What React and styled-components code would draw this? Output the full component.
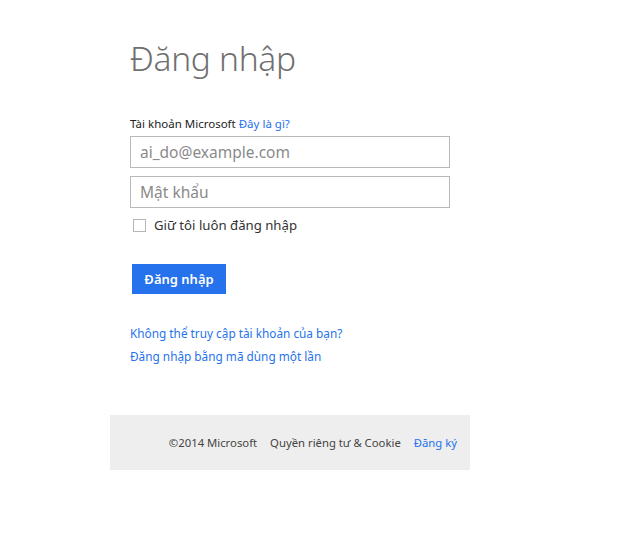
import React from "react";
import styled, { createGlobalStyle } from "styled-components";

const GlobalStyle = createGlobalStyle`
	html, body {
		margin: 0;
		padding: 0;
		background: #fff;
	}

	body {
		font-family: "Noto Sans", "Open Sans", "DejaVu Sans", sans-serif;
		color: #333;
	}
`;

const Page = styled.div`
	width: 637px;
	height: 542px;
	padding-top: 34px;
	box-sizing: border-box;
`;

const Form = styled.form`
	margin: 0 0 0 130px;
	width: 320px;
	display: flex;
	flex-direction: column;
`;

const Title = styled.h1`
	margin: 0 0 34px;
	font-size: 33.5px;
	font-weight: 300;
	line-height: 48px;
	color: #707070;
	letter-spacing: -0.3px;
`;

const Label = styled.div`
	margin: 0 0 4px;
	font-size: 11.5px;
	line-height: 16px;
	color: #222;

	a {
		margin-left: 3px;
	}
`;

const Link = styled.a`
	color: #2672ec;
	text-decoration: none;
	font-size: inherit;
`;

const Input = styled.input`
	box-sizing: border-box;
	width: 320px;
	height: 32px;
	margin: 0 0 8px;
	padding: 0 9px;
	border: 1px solid #bababa;
	border-radius: 0;
	font-family: inherit;
	font-size: 15.5px;
	color: #333;
	outline: none;

	&::placeholder {
		color: #8a8a8a;
	}
`;

const CheckRow = styled.label`
	display: flex;
	align-items: center;
	gap: 8px;
	margin: -1px 0 0 3px;
	font-size: 13.2px;
	line-height: 20px;
	color: #333;
`;

const Box = styled.span`
	display: block;
	width: 11px;
	height: 11px;
	border: 1px solid #b5b5b5;
	background: #fff;
`;

const Button = styled.button`
	align-self: flex-start;
	margin: 29px 0 0 2px;
	width: 94px;
	height: 30px;
	border: none;
	background: #2672ec;
	color: #fff;
	font-family: inherit;
	font-size: 13px;
	font-weight: 600;
	cursor: pointer;
`;

const LinkList = styled.div`
	margin-top: 31px;
	display: flex;
	flex-direction: column;
	gap: 6px;
	font-size: 11.8px;
	line-height: 17px;
`;

const Footer = styled.footer`
	box-sizing: border-box;
	margin: 50px 0 0 110px;
	width: 360px;
	height: 55px;
	padding: 0 13px;
	background: #eeeeee;
	display: flex;
	align-items: center;
	justify-content: flex-end;
	gap: 13px;
	font-size: 11.3px;
	color: #444;
`;

export default function App() {
	return (
		<Page>
			<GlobalStyle />
			<Form onSubmit={e => e.preventDefault()}>
				<Title>Đăng nhập</Title>
				<Label>
					Tài khoản Microsoft<Link href="#">Đây là gì?</Link>
				</Label>
				<Input type="email" placeholder="ai_do@example.com" />
				<Input type="password" placeholder="Mật khẩu" />
				<CheckRow>
					<Box />
					Giữ tôi luôn đăng nhập
				</CheckRow>
				<Button type="submit">Đăng nhập</Button>
				<LinkList>
					<Link href="#">Không thể truy cập tài khoản của bạn?</Link>
					<Link href="#">Đăng nhập bằng mã dùng một lần</Link>
				</LinkList>
			</Form>
			<Footer>
				<span>©2014 Microsoft</span>
				<span>Quyền riêng tư &amp; Cookie</span>
				<Link href="#">Đăng ký</Link>
			</Footer>
		</Page>
	);
}
